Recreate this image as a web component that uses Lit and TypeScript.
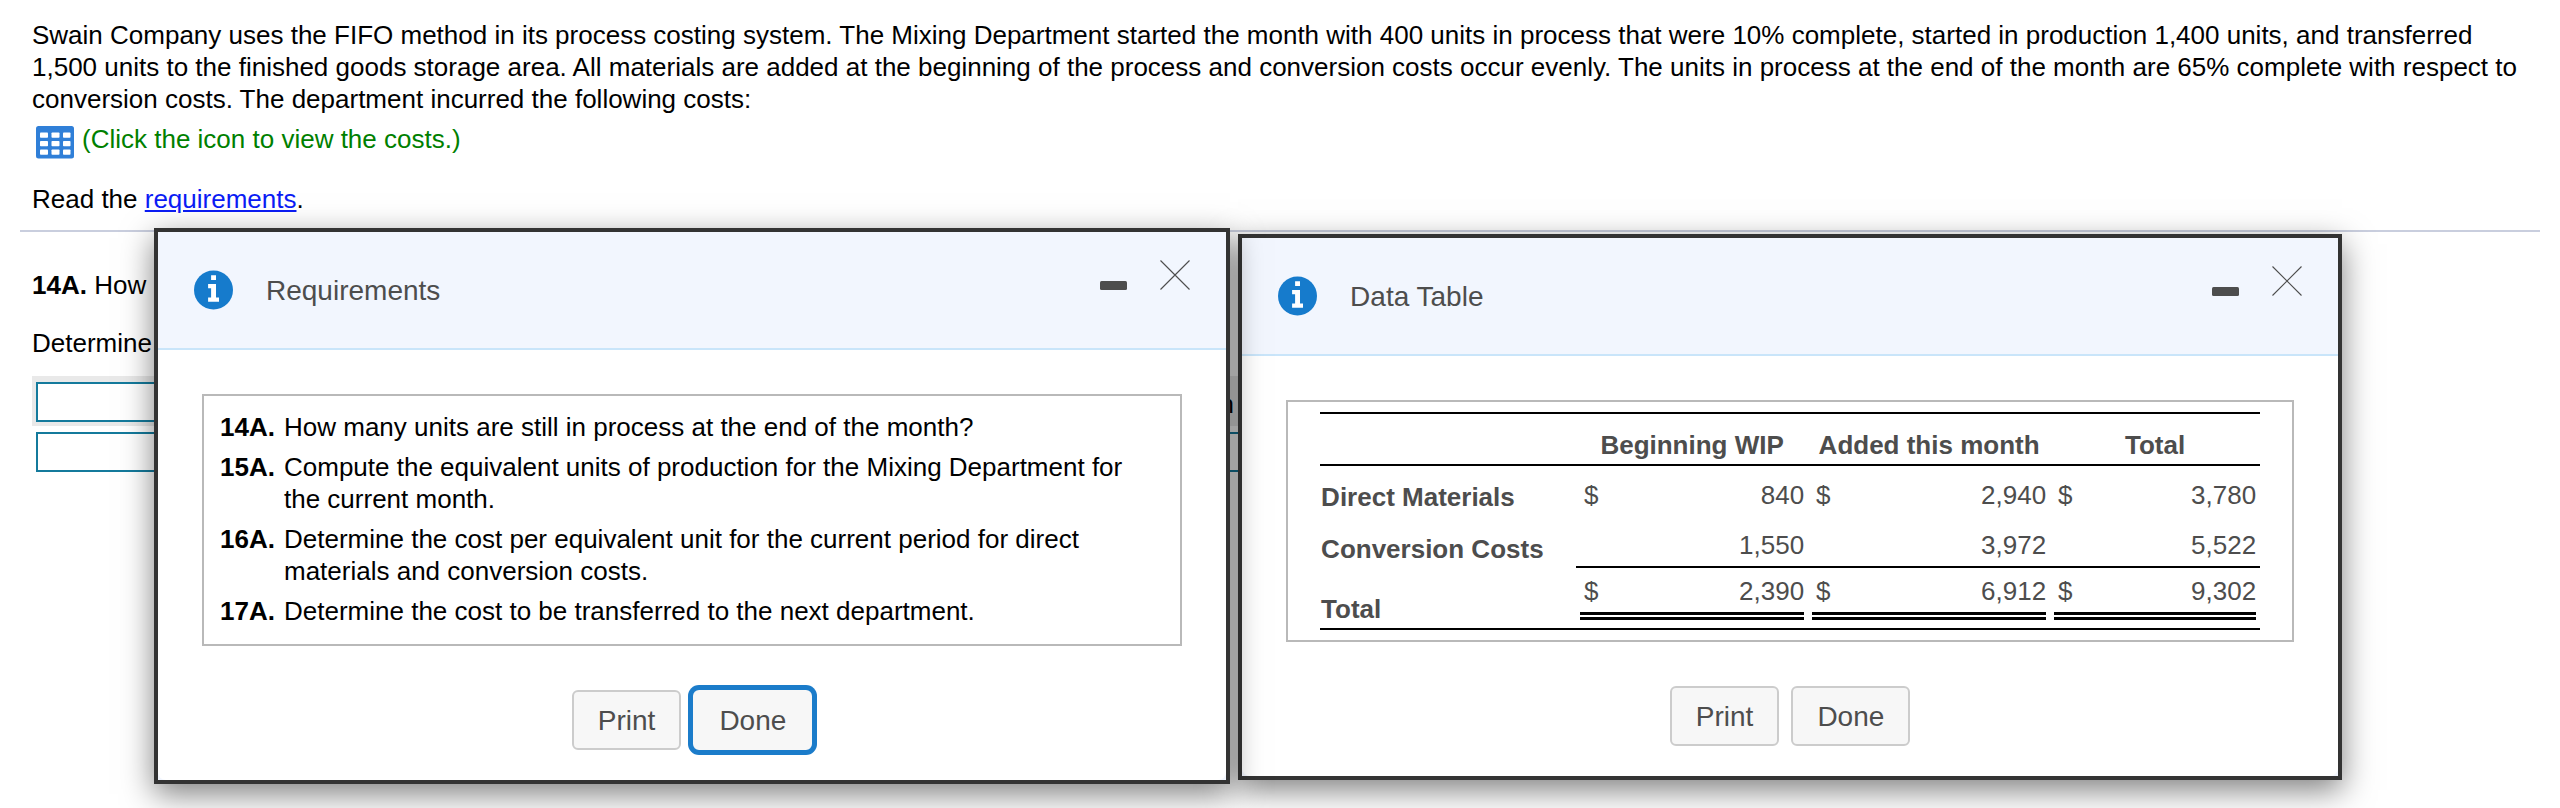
import { LitElement, html, css, nothing } from "lit";
import { customElement, property } from "lit/decorators.js";

interface Requirement {
  id: string;
  text: string;
}

interface CostRow {
  label: string;
  currency: boolean;
  kind: "plain" | "last" | "total";
  values: string[];
}

const REQUIREMENTS: Requirement[] = [
  { id: "14A.", text: "How many units are still in process at the end of the month?" },
  { id: "15A.", text: "Compute the equivalent units of production for the Mixing Department for the current month." },
  { id: "16A.", text: "Determine the cost per equivalent unit for the current period for direct materials and conversion costs." },
  { id: "17A.", text: "Determine the cost to be transferred to the next department." },
];

const COLUMNS = ["Beginning WIP", "Added this month", "Total"];

const COSTS: CostRow[] = [
  { label: "Direct Materials", currency: true, kind: "plain", values: ["840", "2,940", "3,780"] },
  { label: "Conversion Costs", currency: false, kind: "last", values: ["1,550", "3,972", "5,522"] },
  { label: "Total", currency: true, kind: "total", values: ["2,390", "6,912", "9,302"] },
];

/** A floating window with a title bar, a framed body and Print / Done buttons. */
@customElement("info-dialog")
export class InfoDialog extends LitElement {
  @property() heading = "";
  @property({ type: Boolean }) active = false;

  static styles = css`
    :host {
      display: block;
      box-sizing: border-box;
      border: 4px solid #333;
      background: #f2f6fe;
      box-shadow: 0 10px 30px rgba(0, 0, 0, 0.5);
      color: #4d4d4d;
    }
    .bar {
      display: flex;
      align-items: center;
      height: 116px;
      padding: 0 36px;
      border-bottom: 2px solid #c9e5fa;
      background: #f2f6fe;
    }
    .info {
      width: 40px;
      height: 40px;
      margin-right: 32px;
    }
    h2 {
      flex: 1;
      margin: 0;
      padding-top: 2px;
      font-size: 28px;
      font-weight: 400;
      line-height: 32px;
    }
    .control {
      display: block;
      height: 60px;
      padding: 0;
      border: 0;
      background: none;
    }
    .control svg {
      display: block;
      height: 60px;
    }
    .control + .control {
      margin-left: 32px;
    }
    .body {
      padding: 44px 44px 30px;
      border-radius: 0 0 8px 8px;
      background: #fff;
    }
    .frame {
      border: 2px solid #b9b9b9;
    }
    .actions {
      display: flex;
      justify-content: center;
      gap: 12px;
      margin-top: 44px;
    }
    .action {
      height: 60px;
      padding: 2px 24px 0;
      border: 2px solid #ccc;
      border-radius: 6px;
      background: #f7f7f7;
      color: #4d4d4d;
      font: 28px/32px "Liberation Sans", Arial, sans-serif;
    }
    .action.current {
      border-color: #f7f7f7;
      box-shadow: 0 0 0 5px #1b7cca;
    }
  `;

  render() {
    return html`
      <header class="bar">
        <svg class="info" viewBox="0 0 40 40" aria-hidden="true">
          <circle cx="19.500" cy="20" r="19.500" fill="#167bcc" />
          <path
            fill="#fff"
            d="M17.100 5.300h4.900v4.700h-4.900zM14.100 14h7.900v13.600h3v4.200H14.100v-4.200h3V18.200h-3z"
          />
        </svg>
        <h2>${this.heading}</h2>
        <button class="control" aria-label="Minimize">
          <svg width="28" viewBox="0 0 28 60">
            <rect x="0" y="21" width="27" height="9" rx="1.500" fill="#4d4d4d" />
          </svg>
        </button>
        <button class="control" aria-label="Close">
          <svg width="30" viewBox="0 0 30 60">
            <path d="M.5 .5L29.500 29.500M29.500 .5L.5 29.500" stroke="#4d4d4d" stroke-width="1.100" fill="none" />
          </svg>
        </button>
      </header>
      <div class="body">
        <div class="frame"><slot></slot></div>
        <div class="actions">
          <button class="action">Print</button>
          <button class="action ${this.active ? "current" : ""}">Done</button>
        </div>
      </div>
    `;
  }
}

@customElement("app-root")
export class AppRoot extends LitElement {
  static styles = css`
    :host {
      display: block;
      position: relative;
      min-height: 100vh;
      overflow: hidden;
      box-sizing: border-box;
      background: #fff;
      color: #000;
      font: 26px/32px "Liberation Sans", Arial, sans-serif;
    }
    p {
      margin: 0;
    }
    a {
      color: #0b1cf5;
    }
    .problem {
      display: grid;
      padding: 19px 32px 15px;
    }
    .costs-link {
      display: flex;
      gap: 8px;
      margin: 8px 0 28px 4px;
      color: #008000;
    }
    .grid-icon {
      display: block;
      width: 38px;
      height: 38px;
    }
    .open-costs {
      height: 32px;
      padding: 0;
      border: 0;
      background: none;
    }
    .rule {
      height: 2px;
      margin: 0 20px;
      border: 0;
      background: #c9cede;
    }
    .answer {
      display: grid;
      gap: 26px;
      padding: 37px 32px 17px;
    }
    .entry {
      width: 56%;
      margin-left: 32px;
    }
    .entry-row {
      display: flex;
      align-items: center;
      gap: 16px;
      padding: 6px 4px 4px;
    }
    .entry-row.head {
      background: #e9e9e9;
    }
    .entry-row input {
      box-sizing: border-box;
      flex: 2 1 0;
      min-width: 0;
      height: 40px;
      padding: 0 8px;
      border: 2px solid #147a9c;
      background: #fff;
      font: inherit;
    }
    .entry-row .second {
      flex: 1 1 0;
    }
    .entry-label {
      box-sizing: border-box;
      flex: 1 1 0;
      padding: 4px 4px 0 0;
      text-align: center;
    }
    .windows {
      position: absolute;
      top: 228px;
      left: 154px;
      right: 218px;
      display: flex;
      align-items: flex-start;
      gap: 8px;
    }
    .requirements {
      position: relative;
      z-index: 1;
      flex: 1076 1 0;
      min-width: 0;
    }
    .data {
      flex: 1104 1 0;
      min-width: 0;
      margin-top: 6px;
    }
    .list {
      display: grid;
      gap: 8px;
      margin: 0;
      padding: 15px 40px 17px 16px;
      list-style: none;
      color: #000;
    }
    .list li {
      display: grid;
      grid-template-columns: 64px 1fr;
    }
    .table-wrap {
      padding: 10px 32px;
    }
    table {
      width: 100%;
      border-collapse: separate;
      border-spacing: 0;
      table-layout: fixed;
      border-top: 2px solid #000;
      border-bottom: 2px solid #000;
    }
    .c0 {
      width: 256px;
    }
    .c1 {
      width: 232px;
    }
    .c2 {
      width: 242px;
    }
    .c3 {
      width: 210px;
    }
    th,
    td {
      padding: 0;
    }
    thead th,
    thead td {
      padding: 15px 0 3px;
      border-bottom: 2px solid #000;
    }
    tbody th {
      padding: 0 0 3px 1px;
      text-align: left;
      vertical-align: bottom;
    }
    tbody td {
      vertical-align: top;
    }
    .amount {
      display: flex;
      justify-content: space-between;
      margin: 0 4px;
      padding: 13px 0 5px 4px;
    }
    .number {
      margin-left: auto;
    }
    .last td {
      border-bottom: 2px solid #000;
    }
    .total td {
      padding-bottom: 8px;
    }
    .total .amount {
      padding-top: 7px;
      border-bottom: 8px double #000;
    }
  `;

  private renderRow(row: CostRow) {
    return html`
      <tr class=${row.kind}>
        <th scope="row">${row.label}</th>
        ${row.values.map(
          (value) => html`
            <td>
              <div class="amount">
                ${row.currency ? html`<span>$</span>` : nothing}
                <span class="number">${value}</span>
              </div>
            </td>
          `
        )}
      </tr>
    `;
  }

  render() {
    return html`
      <section class="problem">
        <p>
          Swain Company uses the FIFO method in its process costing system. The Mixing Department started the month
          with 400 units in process that were 10% complete, started in production 1,400 units, and transferred 1,500
          units to the finished goods storage area. All materials are added at the beginning of the process and
          conversion costs occur evenly. The units in process at the end of the month are 65% complete with respect to
          conversion costs. The department incurred the following costs:
        </p>
        <div class="costs-link">
          <button class="open-costs" aria-label="View the costs">
            <svg class="grid-icon" viewBox="0 0 38 38">
              <rect y="3" width="38" height="32.500" rx="2.500" fill="#2f7fd8" />
              <g fill="#fff">
                <rect x="4" y="9.500" width="8" height="5.200" rx=".8" />
                <rect x="15.500" y="9.500" width="8" height="5.200" rx=".8" />
                <rect x="27" y="9.500" width="7.500" height="5.200" rx=".8" />
                <rect x="4" y="18" width="8" height="5.200" rx=".8" />
                <rect x="15.500" y="18" width="8" height="5.200" rx=".8" />
                <rect x="27" y="18" width="7.500" height="5.200" rx=".8" />
                <rect x="4" y="26.500" width="8" height="5.200" rx=".8" />
                <rect x="15.500" y="26.500" width="8" height="5.200" rx=".8" />
                <rect x="27" y="26.500" width="7.500" height="5.200" rx=".8" />
              </g>
            </svg>
          </button>
          <span>(Click the icon to view the costs.)</span>
        </div>
        <p>Read the <a href="#requirements">requirements</a>.</p>
      </section>
      <hr class="rule" />
      <section class="answer">
        <p><b>14A.</b> How</p>
        <p>Determine</p>
      </section>
      <div class="entry">
        <div class="entry-row head">
          <input aria-label="First heading" />
          <span class="entry-label">n</span>
        </div>
        <div class="entry-row">
          <input aria-label="First amount" />
          <input class="second" aria-label="Second amount" />
        </div>
      </div>

      <div class="windows">
        <info-dialog class="requirements" id="requirements" role="dialog" heading="Requirements" active>
          <ol class="list">
            ${REQUIREMENTS.map((r) => html`<li><b>${r.id}</b><span>${r.text}</span></li>`)}
          </ol>
        </info-dialog>
        <info-dialog class="data" role="dialog" heading="Data Table">
          <div class="table-wrap">
            <table>
              <colgroup>
                <col class="c0" />
                <col class="c1" />
                <col class="c2" />
                <col class="c3" />
              </colgroup>
              <thead>
                <tr>
                  <td></td>
                  ${COLUMNS.map((c) => html`<th scope="col">${c}</th>`)}
                </tr>
              </thead>
              <tbody>
                ${COSTS.map((row) => this.renderRow(row))}
              </tbody>
            </table>
          </div>
        </info-dialog>
      </div>
    `;
  }
}
